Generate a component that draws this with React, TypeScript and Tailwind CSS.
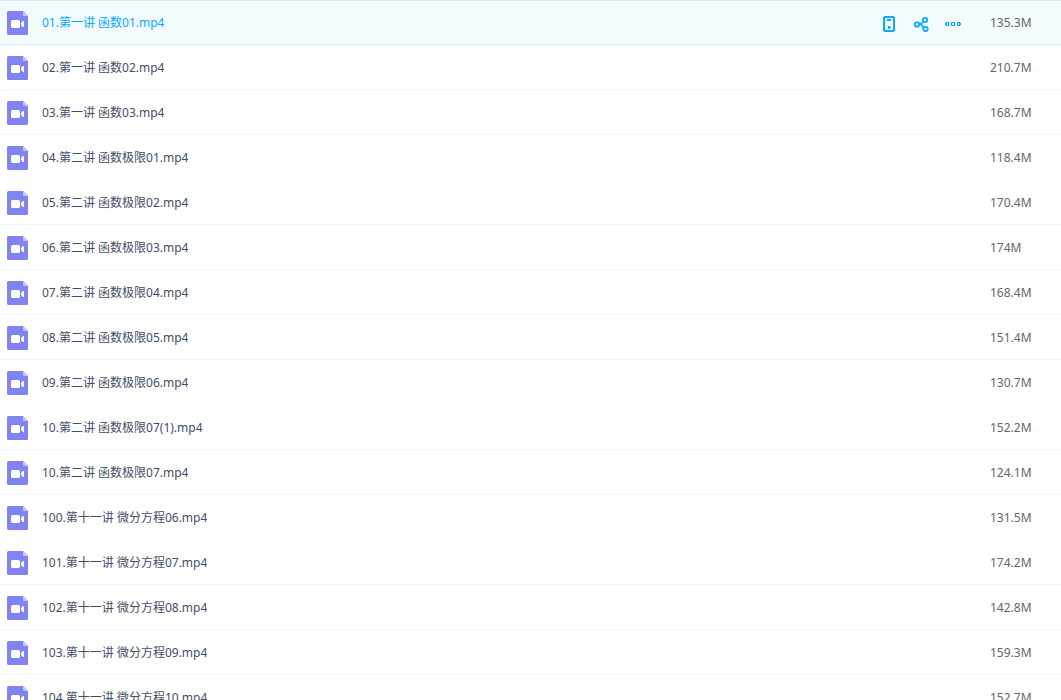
import React, { useState } from 'react';
import clsx from 'clsx';

interface VideoFile {
  id: number;
  name: string;
  size: string;
}

const files: VideoFile[] = [
  { id: 1, name: '01.第一讲 函数01.mp4', size: '135.3M' },
  { id: 2, name: '02.第一讲 函数02.mp4', size: '210.7M' },
  { id: 3, name: '03.第一讲 函数03.mp4', size: '168.7M' },
  { id: 4, name: '04.第二讲 函数极限01.mp4', size: '118.4M' },
  { id: 5, name: '05.第二讲 函数极限02.mp4', size: '170.4M' },
  { id: 6, name: '06.第二讲 函数极限03.mp4', size: '174M' },
  { id: 7, name: '07.第二讲 函数极限04.mp4', size: '168.4M' },
  { id: 8, name: '08.第二讲 函数极限05.mp4', size: '151.4M' },
  { id: 9, name: '09.第二讲 函数极限06.mp4', size: '130.7M' },
  { id: 10, name: '10.第二讲 函数极限07(1).mp4', size: '152.2M' },
  { id: 11, name: '10.第二讲 函数极限07.mp4', size: '124.1M' },
  { id: 12, name: '100.第十一讲 微分方程06.mp4', size: '131.5M' },
  { id: 13, name: '101.第十一讲 微分方程07.mp4', size: '174.2M' },
  { id: 14, name: '102.第十一讲 微分方程08.mp4', size: '142.8M' },
  { id: 15, name: '103.第十一讲 微分方程09.mp4', size: '159.3M' },
  { id: 16, name: '104.第十一讲 微分方程10.mp4', size: '152.7M' },
];

const VideoIcon = () => (
  <svg className="w-[21px] h-6 shrink-0" viewBox="0 0 21 24" aria-hidden="true">
    <path d="M1.5 0H16l5 5v17.5a1.5 1.5 0 0 1-1.5 1.5h-18A1.5 1.5 0 0 1 0 22.5v-21A1.5 1.5 0 0 1 1.5 0z" fill="#8183f1" />
    <path d="M16 0l5 5h-4a1 1 0 0 1-1-1z" fill="#c3c4f9" />
    <rect x="4" y="9" width="9" height="8" rx="1.5" fill="#fff" />
    <path d="M14 12l2-2h1v6h-1l-2-2z" fill="#fff" />
  </svg>
);

const PhoneIcon = () => (
  <svg className="w-4 h-4" viewBox="0 0 16 16" fill="none" shapeRendering="crispEdges" aria-hidden="true">
    <path
      d="M3 0h10v1h1v14h-1v1H3v-1H2V1h1zM4 2v12h8V2z"
      fill="currentColor"
      fillRule="evenodd"
    />
    <path d="M6 3h4v2H6zM7 10h2v1h1v1H9v1H7z" fill="currentColor" />
  </svg>
);

const ShareIcon = () => (
  <svg className="w-4 h-4" viewBox="0 0 16 16" fill="none" stroke="currentColor" strokeWidth="1.8" aria-hidden="true">
    <circle cx="4" cy="8.5" r="2.2" />
    <circle cx="12" cy="4" r="2.2" />
    <circle cx="12.5" cy="13" r="2.2" />
    <path d="M6 8h2l2-2.5M8 8.500l2.500 3" />
  </svg>
);

const MoreIcon = () => (
  <svg className="w-4 h-4" viewBox="0 0 16 16" fill="none" shapeRendering="crispEdges" aria-hidden="true">
    <path
      d="M1 6h3v4H1V9H0V7h1zM2 7v2h1V7zM6 6h4v4H6zM7 7v2h2V7zM12 6h3v1h1v2h-1v1h-3zM13 7v2h1V7z"
      fill="currentColor"
      fillRule="evenodd"
    />
  </svg>
);

const actions = [
  { label: '发送到手机', Icon: PhoneIcon },
  { label: '分享', Icon: ShareIcon },
  { label: '更多', Icon: MoreIcon },
];

const App: React.FC = () => {
  const [activeId, setActiveId] = useState(1);

  return (
    <main className="h-screen overflow-hidden bg-white text-xs font-['Noto_Sans','Noto_Sans_CJK_SC',sans-serif]">
      <table className="w-full table-fixed border-separate border-spacing-0" aria-label="文件列表">
        <colgroup>
          <col />
          <col className="w-[109px]" />
          <col className="w-[71px]" />
        </colgroup>
        <tbody>
          {files.map((file) => {
            const active = file.id === activeId;
            const cell = clsx(
              'h-[45px] p-0 border-y align-middle',
              active ? 'border-[#d3eaff] bg-[#f3fbff]' : 'border-t-transparent border-b-[#f2f6fd]'
            );
            return (
              <tr key={file.id} onMouseEnter={() => setActiveId(file.id)}>
                <td className={cell}>
                  <div className="flex items-center gap-3.5 pl-[7px] pt-px">
                    <VideoIcon />
                    <a href="#" className={clsx('truncate leading-4', active ? 'text-[#09aaff]' : 'text-[#424e67]')}>
                      {file.name}
                    </a>
                  </div>
                </td>
                <td className={cell}>
                  {active && (
                    <div className="flex items-center gap-4 pt-[3px] text-[#09aaff]">
                      {actions.map(({ label, Icon }) => (
                        <button key={label} type="button" aria-label={label} title={label} className="cursor-pointer">
                          <Icon />
                        </button>
                      ))}
                    </div>
                  )}
                </td>
                <td className={clsx(cell, 'leading-4 text-[#666]')}>{file.size}</td>
              </tr>
            );
          })}
        </tbody>
      </table>
    </main>
  );
};

export default App;
